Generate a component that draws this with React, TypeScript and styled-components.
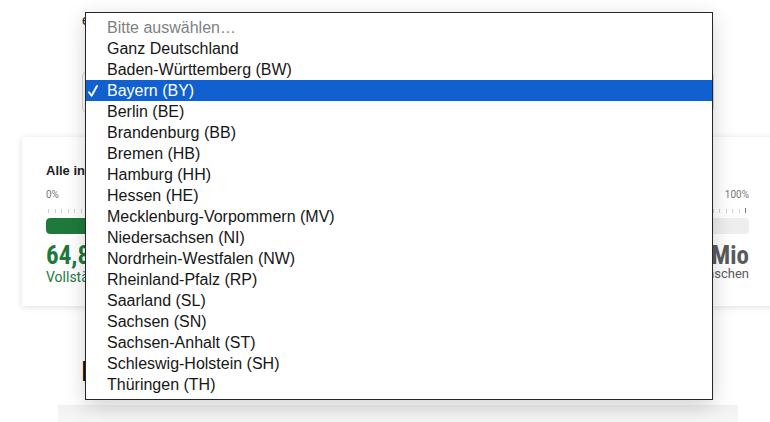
import styled, { createGlobalStyle } from 'styled-components';

const GlobalStyle = createGlobalStyle`
  html, body {
    margin: 0;
    padding: 0;
    background: #fff;
    overflow: hidden;
  }
  body {
    font-family: 'Liberation Sans', Arial, sans-serif;
    color: #222;
  }
  * {
    box-sizing: border-box;
  }
`;

const Page = styled.div`
  position: relative;
  width: 770px;
  height: 422px;
  overflow: hidden;
  padding-top: 11px;
`;

const FilterLabel = styled.div`
  margin-left: 82px;
  font-size: 14px;
  line-height: 18px;
  color: #222;
`;

const SelectBox = styled.div`
  margin: 43px 56px 0 82px;
  height: 40px;
  border: 1px solid #d6d6d6;
  border-radius: 4px;
  background: #fff;
`;

const Card = styled.section`
  margin: 25px 0 0 22px;
  width: 760px;
  padding: 26px 33px 20px 24px;
  background: #fff;
  border-radius: 2px;
  box-shadow: 0 1px 7px rgba(0, 0, 0, 0.13);
`;

const CardTitle = styled.h3`
  margin: 0;
  font-size: 13px;
  line-height: 16px;
  font-weight: 700;
  color: #1d1d1d;
`;

const ScaleLabels = styled.div`
  display: flex;
  justify-content: space-between;
  margin-top: 10px;
  font-family: Roboto, sans-serif;
  font-size: 10px;
  line-height: 12px;
  color: #777;
`;

const Ticks = styled.div`
  display: flex;
  justify-content: space-between;
  align-items: flex-end;
  margin: 7px 2px 0 2px;
  height: 5px;
`;

const Tick = styled.span<{ $last?: boolean }>`
  width: 1px;
  height: ${(p) => (p.$last ? '5px' : '4px')};
  background: ${(p) => (p.$last ? '#777' : '#cfcfcf')};
`;

const Track = styled.div`
  margin-top: 5px;
  height: 16px;
  border-radius: 4px;
  background: #eeeeee;
  overflow: hidden;
`;

const Fill = styled.div`
  height: 100%;
  background: #1e7a3c;
  border-radius: 4px;
`;

const Stats = styled.div`
  display: flex;
  justify-content: space-between;
  margin-top: 9px;
`;

const Stat = styled.div<{ $right?: boolean }>`
  display: flex;
  flex-direction: column;
  align-items: ${(p) => (p.$right ? 'flex-end' : 'flex-start')};
  color: ${(p) => (p.$right ? '#5a5a5a' : '#1e7a3c')};
`;

const StatValue = styled.span`
  font-family: 'Roboto Condensed', 'Liberation Sans Narrow', Roboto, sans-serif;
  font-stretch: condensed;
  font-size: 25px;
  line-height: 26px;
  font-weight: 700;
`;

const StatCaption = styled.span<{ $small?: boolean }>`
  font-family: Roboto, sans-serif;
  font-size: ${(p) => (p.$small ? '13px' : '14px')};
  line-height: 17px;
  margin-top: ${(p) => (p.$small ? '-4px' : '0')};
`;

const Heading = styled.h2`
  margin: 49px 0 0 81px;
  font-family: Roboto, sans-serif;
  font-size: 28px;
  line-height: 34px;
  font-weight: 500;
  color: #111;
`;

const Panel = styled.div`
  margin: 16px 32px 0 58px;
  height: 19px;
  background: linear-gradient(#f1f1f1, #f7f7f7);
`;

const Menu = styled.ul`
  position: absolute;
  top: 12px;
  left: 85px;
  width: 628px;
  margin: 0;
  padding: 4px 0 4px;
  list-style: none;
  background: #fff;
  border: 1px solid #262626;
  box-shadow: 0 6px 20px rgba(0, 0, 0, 0.18);
  font-family: 'Liberation Sans', Arial, sans-serif;
  font-size: 16px;
`;

const Option = styled.li<{ $selected?: boolean; $placeholder?: boolean }>`
  display: flex;
  align-items: center;
  height: 21px;
  line-height: 21px;
  background: ${(p) => (p.$selected ? '#1160d0' : 'transparent')};
  color: ${(p) => (p.$selected ? '#fff' : p.$placeholder ? '#7f7f7f' : '#161616')};
  white-space: nowrap;
`;

const Check = styled.span`
  display: flex;
  align-items: center;
  width: 21px;
  height: 21px;
  padding-left: 2px;
`;

const CheckMark = () => (
  <svg width="10" height="12" viewBox="0 0 10 12" fill="none">
    <path
      d="M1 7.2 L3.6 10.8 L9 1"
      stroke="currentColor"
      strokeWidth="1.9"
      strokeLinecap="round"
      strokeLinejoin="round"
    />
  </svg>
);

const states = [
  'Ganz Deutschland',
  'Baden-Württemberg (BW)',
  'Bayern (BY)',
  'Berlin (BE)',
  'Brandenburg (BB)',
  'Bremen (HB)',
  'Hamburg (HH)',
  'Hessen (HE)',
  'Mecklenburg-Vorpommern (MV)',
  'Niedersachsen (NI)',
  'Nordrhein-Westfalen (NW)',
  'Rheinland-Pfalz (RP)',
  'Saarland (SL)',
  'Sachsen (SN)',
  'Sachsen-Anhalt (ST)',
  'Schleswig-Holstein (SH)',
  'Thüringen (TH)',
];

const selected = 'Bayern (BY)';
const progress = 64.8;
const tickCount = 108;

const App = (): JSX.Element => {
  return (
    <Page>
      <GlobalStyle />
      <FilterLabel>eingrenzen nach Bundesland</FilterLabel>
      <SelectBox />

      <Card>
        <CardTitle>Alle in Deutschland lebenden Menschen</CardTitle>
        <ScaleLabels>
          <span>0%</span>
          <span>100%</span>
        </ScaleLabels>
        <Ticks>
          {Array.from({ length: tickCount }, (_, i) => (
            <Tick key={i} $last={i === tickCount - 1} />
          ))}
        </Ticks>
        <Track>
          <Fill style={{ width: `${progress}%` }} />
        </Track>
        <Stats>
          <Stat>
            <StatValue>64,8 %</StatValue>
            <StatCaption>Vollständig geimpft</StatCaption>
          </Stat>
          <Stat $right>
            <StatValue>83,2 Mio</StatValue>
            <StatCaption $small>lebende Menschen</StatCaption>
          </Stat>
        </Stats>
      </Card>

      <Heading>Bundesländer im Vergleich</Heading>
      <Panel />

      <Menu>
        <Option $placeholder>
          <Check />
          Bitte auswählen…
        </Option>
        {states.map((s) => (
          <Option key={s} $selected={s === selected}>
            <Check>{s === selected ? <CheckMark /> : null}</Check>
            {s}
          </Option>
        ))}
      </Menu>
    </Page>
  );
};

export default App;
